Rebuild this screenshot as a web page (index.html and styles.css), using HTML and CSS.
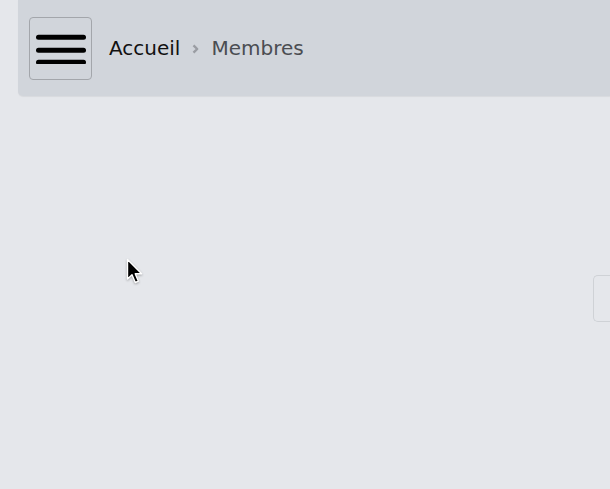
FILE: index.html
```html
<!DOCTYPE html>
<html lang="fr">
<head>
<meta charset="utf-8">
<title>Membres</title>
<link rel="stylesheet" href="styles.css">
</head>
<body>
<header class="topbar">
  <button class="menu-btn" aria-label="Menu">
    <svg width="50" height="30" viewBox="0 0 50 30">
      <line x1="2.5" y1="3.3" x2="47.5" y2="3.3" stroke="#000" stroke-width="5" stroke-linecap="round"/>
      <line x1="2.5" y1="16.3" x2="47.5" y2="16.3" stroke="#000" stroke-width="5" stroke-linecap="round"/>
      <line x1="2.5" y1="28.3" x2="47.5" y2="28.3" stroke="#000" stroke-width="5" stroke-linecap="round"/>
    </svg>
  </button>
  <nav class="crumbs">
    <a class="crumb-link">Accueil</a>
    <span class="crumb-sep">
      <svg width="7" height="10" viewBox="0 0 7 10"><path d="M1.5 1.3 L5.2 5 L1.5 8.7" fill="none" stroke="#9a9da3" stroke-width="2.4" stroke-linejoin="round"/></svg>
    </span>
    <span class="crumb-current">Membres</span>
  </nav>
</header>
<main class="content">
  <div class="card"></div>
</main>
<svg class="cursor" width="20" height="28" viewBox="0 0 20 28">
  <path d="M1.5 1.5 L1.5 21 L6 16.8 L9.3 24.5 L12.4 23.2 L9.2 15.8 L15.6 15.8 Z" fill="#000" stroke="#fff" stroke-width="1.4" stroke-linejoin="round"/>
</svg>
</body>
</html>
```
FILE: styles.css
```css
html, body {
  margin: 0;
  padding: 0;
}
body {
  background: #e5e7eb;
  font-family: "DejaVu Sans", "Liberation Sans", sans-serif;
  width: 610px;
  height: 489px;
  overflow: hidden;
  position: relative;
}
.topbar {
  margin-left: 18px;
  height: 96px;
  background: #d1d5db;
  border-bottom-left-radius: 5px;
  box-shadow: 0 1px 1px rgba(0,0,0,0.06);
  display: flex;
  align-items: center;
  padding-left: 11px;
  box-sizing: border-box;
}
.menu-btn {
  width: 63px;
  height: 63px;
  margin-top: 1px;
  border: 1px solid #a3a6ab;
  border-radius: 4px;
  background: transparent;
  padding: 0;
  display: flex;
  align-items: center;
  justify-content: center;
}
.menu-btn svg {
  display: block;
  margin-top: 1px;
}
.crumbs {
  display: flex;
  align-items: center;
  margin-left: 17px;
  font-size: 20px;
  line-height: 24px;
}
.crumb-link {
  color: #111;
}
.crumb-sep {
  display: flex;
  margin-left: 12px;
  margin-right: 12px;
  margin-top: 2px;
}
.crumb-sep svg {
  display: block;
}
.crumb-current {
  color: #4b4d52;
}
.content {
  padding-top: 179px;
}
.card {
  margin-left: 593px;
  width: 16px;
  height: 45px;
  border: 1px solid #cfd2d6;
  border-right: none;
  border-radius: 5px 0 0 5px;
}
.cursor {
  position: absolute;
  left: 126px;
  top: 258px;
  filter: drop-shadow(0 1px 1px rgba(0,0,0,0.3));
}
```
